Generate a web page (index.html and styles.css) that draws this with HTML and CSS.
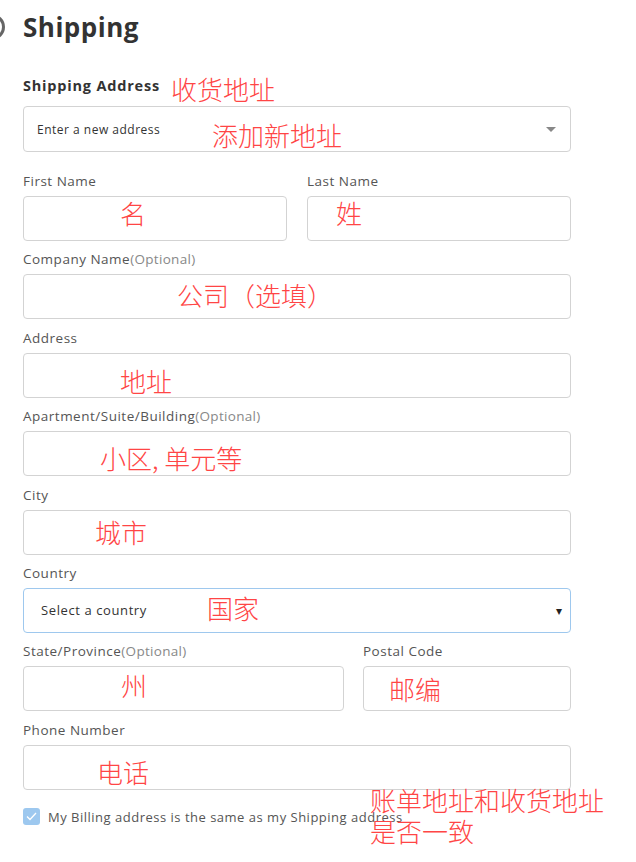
FILE: index.html
```html
<!DOCTYPE html>
<html lang="zh-CN">
<head>
  <meta charset="UTF-8">
  <meta name="viewport" content="width=device-width, initial-scale=1.0">
  <title>Shipping</title>
  <link rel="stylesheet" href="styles.css">
</head>
<body>
  <div class="page">
    <div class="step-head">
      <span class="step-num"></span>
      <h2>Shipping</h2>
    </div>

    <div class="field field-top">
      <label class="label-strong">Shipping Address</label>
      <div class="select-box">
        <span>Enter a new address</span>
        <span class="caret"></span>
      </div>
    </div>

    <div class="row">
      <div class="field">
        <label>First Name</label>
        <div class="input"></div>
      </div>
      <div class="field">
        <label>Last Name</label>
        <div class="input"></div>
      </div>
    </div>

    <div class="field">
      <label>Company Name<span class="opt">(Optional)</span></label>
      <div class="input"></div>
    </div>

    <div class="field">
      <label>Address</label>
      <div class="input"></div>
    </div>

    <div class="field">
      <label>Apartment/Suite/Building<span class="opt">(Optional)</span></label>
      <div class="input"></div>
    </div>

    <div class="field">
      <label>City</label>
      <div class="input"></div>
    </div>

    <div class="field">
      <label>Country</label>
      <div class="input country">
        <span>Select a country</span>
        <span class="caret-dark">&#9662;</span>
      </div>
    </div>

    <div class="row row-state">
      <div class="field">
        <label>State/Province<span class="opt">(Optional)</span></label>
        <div class="input"></div>
      </div>
      <div class="field">
        <label>Postal Code</label>
        <div class="input"></div>
      </div>
    </div>

    <div class="field">
      <label>Phone Number</label>
      <div class="input"></div>
    </div>

    <div class="check-row">
      <span class="checkbox">
        <svg width="11" height="9" viewBox="0 0 11 9"><path d="M1 4.5 L4 7.5 L10 1" fill="none" stroke="#fff" stroke-width="1.3"/></svg>
      </span>
      <span>My Billing address is the same as my Shipping address</span>
    </div>

    <!-- annotations -->
    <span class="note n-ship">收货地址</span>
    <span class="note n-new">添加新地址</span>
    <span class="note n-first">名</span>
    <span class="note n-last">姓</span>
    <span class="note n-company">公司（选填）</span>
    <span class="note n-address">地址</span>
    <span class="note n-apt">小区, 单元等</span>
    <span class="note n-city">城市</span>
    <span class="note n-country">国家</span>
    <span class="note n-state">州</span>
    <span class="note n-postal">邮编</span>
    <span class="note n-phone">电话</span>
    <span class="note n-billing">账单地址和收货地址<br>是否一致</span>
  </div>
</body>
</html>
```

FILE: styles.css
```css
body {
  margin: 0;
  background: #fff;
  font-family: "Open Sans", Arial, sans-serif;
  color: #555;
}
.page {
  position: relative;
  width: 548px;
  min-height: 854px;
  padding: 8px 0 0 23px;
}
.step-head {
  display: flex;
  align-items: center;
  gap: 18px;
  height: 38px;
}
.step-num {
  width: 26px;
  height: 26px;
  margin-left: -44px;
  border-radius: 50%;
  border: 3px solid #666;
  box-sizing: border-box;
}
h2 {
  margin: 0;
  font-size: 26px;
  font-weight: 700;
  letter-spacing: 0.5px;
  color: #333;
  line-height: 38px;
}
.field {
  margin-bottom: 10.4px;
}
.field-top {
  margin-top: 32px;
  margin-bottom: 21px;
}
label {
  display: block;
  font-size: 13.5px;
  letter-spacing: 0.5px;
  line-height: 16px;
  margin-bottom: 7px;
  color: #555;
}
.label-strong {
  font-size: 14.5px;
  font-weight: 700;
  letter-spacing: 0.8px;
  color: #333;
  margin-bottom: 12px;
}
.opt {
  color: #888;
  letter-spacing: 0.3px;
}
.select-box, .input {
  box-sizing: border-box;
  height: 45px;
  border: 1px solid #d3d3d3;
  border-radius: 4px;
  background: #fff;
}
.select-box {
  height: 46px;
  display: flex;
  align-items: center;
  justify-content: space-between;
  padding: 0 14px 0 13px;
  font-size: 12px;
  letter-spacing: 0.5px;
  color: #333;
}
.caret {
  width: 0;
  height: 0;
  border-left: 5px solid transparent;
  border-right: 5px solid transparent;
  border-top: 5px solid #888;
}
.row {
  display: grid;
  grid-template-columns: 264px 264px;
  column-gap: 20px;
}
.row-state {
  grid-template-columns: 321px 208px;
  column-gap: 19px;
}
.country {
  display: flex;
  align-items: center;
  justify-content: space-between;
  padding: 0 7px 0 17px;
  border-color: #9ec8ee;
  font-size: 13px;
  letter-spacing: 0.6px;
  color: #333;
}
.caret-dark {
  font-size: 12px;
  color: #222;
}
.check-row {
  display: flex;
  align-items: center;
  gap: 8px;
  margin-top: 18px;
  font-size: 13px;
  letter-spacing: 0.5px;
  color: #555;
}
.checkbox {
  width: 17px;
  height: 17px;
  border-radius: 3px;
  background: #9dc8ef;
  display: flex;
  align-items: center;
  justify-content: center;
}
.note {
  position: absolute;
  font-family: "Noto Sans CJK SC", sans-serif;
  font-weight: 300;
  font-size: 26px;
  line-height: 30px;
  color: #ff4545;
  white-space: nowrap;
}
.n-ship { left: 171px; top: 74px; }
.n-new { left: 212px; top: 120px; }
.n-first { left: 120px; top: 198px; }
.n-last { left: 336px; top: 198px; }
.n-company { left: 177px; top: 280px; }
.n-address { left: 120px; top: 366px; }
.n-apt { left: 100px; top: 443px; }
.n-city { left: 95px; top: 517px; }
.n-country { left: 207px; top: 593px; }
.n-state { left: 121px; top: 670px; }
.n-postal { left: 389px; top: 674px; }
.n-phone { left: 97px; top: 757px; }
.n-billing { left: 370px; top: 784px; line-height: 31px; }
```
